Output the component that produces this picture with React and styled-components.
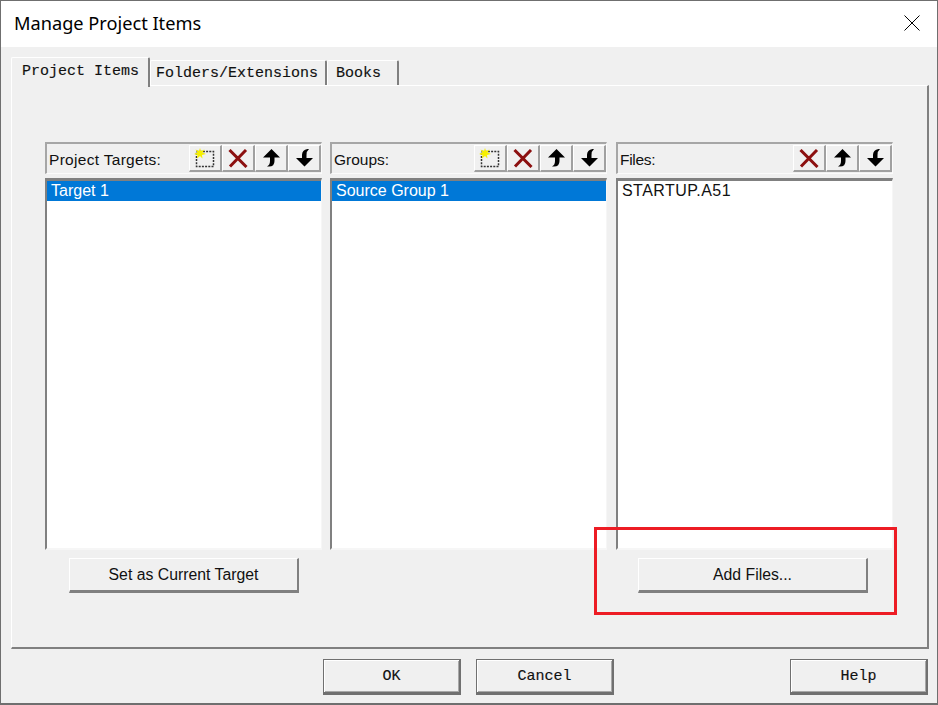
import React from "react";
import styled, { createGlobalStyle } from "styled-components";

const GlobalStyle = createGlobalStyle`
    html, body {
        margin: 0;
        padding: 0;
        background: #f0f0f0;
    }
`;

const columns = [
    {
        title: "Project Targets:",
        titleTracking: 0.3,
        items: ["Target 1"],
        selected: true,
        canAdd: true,
        action: "Set as Current Target",
        actionLeft: 24,
    },
    {
        title: "Groups:",
        titleTracking: 0,
        items: ["Source Group 1"],
        selected: true,
        canAdd: true,
    },
    {
        title: "Files:",
        titleTracking: -0.3,
        items: ["STARTUP.A51"],
        itemTracking: 0.45,
        selected: false,
        canAdd: false,
        action: "Add Files...",
        actionLeft: 22,
    },
];

function NewIcon() {
    return (
        <svg width="22" height="20" viewBox="0 0 22 20">
            <rect x="2.5" y="3.5" width="17" height="15" fill="none" stroke="#333" strokeWidth="1.5" strokeDasharray="2 1.2" />
            <path d="M6 0 L7 3 L10.5 1.5 L8.5 4.5 L12 6 L8 7 L8.5 10.5 L6 8 L3 10.5 L3.5 7 L0 6 L3.5 4.5 L1.5 1.5 L5 3 Z" fill="#f6f000" />
        </svg>
    );
}

function DeleteIcon() {
    return (
        <svg width="20" height="19" viewBox="0 0 20 19">
            <path d="M1.5 1 L18.5 18 M18 1 L2 17.5" fill="none" stroke="#8c1010" strokeWidth="3" />
        </svg>
    );
}

function UpIcon() {
    return (
        <svg width="17" height="18" viewBox="0 0 17 18">
            <path d="M8.5 0 L17 8.5 H11.5 V12 Q11.5 17.5 6 17.5 H4 Q7 16 7 12 V8.5 H0 Z" fill="#000" />
        </svg>
    );
}

function DownIcon() {
    return (
        <svg width="17" height="18" viewBox="0 0 17 18">
            <path d="M8.5 17.5 L0 9 H6 V6 Q6 1 11.5 0 H13 Q10.5 2 10.5 6 V9 H17 Z" fill="#000" />
        </svg>
    );
}

export default function App() {
    return (
        <Window>
            <GlobalStyle />
            <TitleBar>
                <Title>Manage Project Items</Title>
                <CloseButton>
                    <svg width="16" height="16" viewBox="0 0 16 16">
                        <path d="M0.5 0.5 L15.5 15.5 M15.5 0.5 L0.5 15.5" stroke="#000" strokeWidth="1" />
                    </svg>
                </CloseButton>
            </TitleBar>
            <Body>
                <TabStrip>
                    <Tab $active>Project Items</Tab>
                    <Tab>Folders/Extensions</Tab>
                    <Tab $last>Books</Tab>
                </TabStrip>
                <Panel>
                    <ColumnGrid>
                        {columns.map((column) => (
                            <Column key={column.title}>
                                <ColumnHeader>
                                    <HeaderLabel $tracking={column.titleTracking}>{column.title}</HeaderLabel>
                                    {column.canAdd && (
                                        <ToolButton>
                                            <NewIcon />
                                        </ToolButton>
                                    )}
                                    <ToolButton>
                                        <DeleteIcon />
                                    </ToolButton>
                                    <ToolButton>
                                        <UpIcon />
                                    </ToolButton>
                                    <ToolButton>
                                        <DownIcon />
                                    </ToolButton>
                                </ColumnHeader>
                                <ListBox>
                                    {column.items.map((item) => (
                                        <ListItem key={item} $selected={column.selected} $tracking={column.itemTracking}>
                                            {item}
                                        </ListItem>
                                    ))}
                                </ListBox>
                                <ActionRow>
                                    {column.action && <ActionButton $left={column.actionLeft}>{column.action}</ActionButton>}
                                </ActionRow>
                            </Column>
                        ))}
                    </ColumnGrid>
                </Panel>
                <Footer>
                    <FooterGroup>
                        <DialogButton>OK</DialogButton>
                        <DialogButton>Cancel</DialogButton>
                    </FooterGroup>
                    <DialogButton>Help</DialogButton>
                </Footer>
            </Body>
            <Highlight />
        </Window>
    );
}

const Window = styled.div`
    position: relative;
    box-sizing: border-box;
    width: 938px;
    height: 705px;
    display: flex;
    flex-direction: column;
    border: 1px solid #6f6f6f;
    border-bottom-width: 2px;
    background: #f0f0f0;
    overflow: hidden;
`;

const TitleBar = styled.div`
    flex: none;
    height: 46px;
    box-sizing: border-box;
    display: flex;
    align-items: center;
    justify-content: space-between;
    background: #fff;
    padding: 0 17px 2px 13px;
`;

const Title = styled.div`
    font-family: "Noto Sans", sans-serif;
    font-size: 18.2px;
    color: #000;
`;

const CloseButton = styled.div`
    display: flex;
    width: 16px;
    height: 16px;
`;

const Body = styled.div`
    flex: 1;
    display: flex;
    flex-direction: column;
    padding: 10px 9px 0 10px;
`;

const TabStrip = styled.div`
    display: flex;
    align-items: flex-start;
    height: 28px;
    position: relative;
    z-index: 1;
`;

const Tab = styled.div`
    box-sizing: border-box;
    height: ${({ $active }) => ($active ? "30px" : "25px")};
    margin-top: ${({ $active }) => ($active ? "0" : "3px")};
    padding: ${({ $active, $last }) => ($active ? "5px 0 0 10px" : $last ? "4px 0 0 8px" : "4px 0 0 5px")};
    width: ${({ $active, $last }) => ($active ? "139px" : $last ? "72px" : "177px")};
    background: #f0f0f0;
    border-top: 1px solid #fff;
    border-left: 1px solid #fff;
    border-right: 2px solid #808080;
    border-radius: 2px 2px 0 0;
    font-family: "Liberation Mono", monospace;
    font-size: 15px;
    -webkit-text-stroke: 0.15px #111;
    color: #111;
    white-space: pre;
`;

const Panel = styled.div`
    box-sizing: border-box;
    width: 918px;
    height: 564px;
    padding: 56px 0 0 33px;
    border-top: 1px solid #fff;
    border-left: 1px solid #fff;
    border-right: 2px solid #808080;
    border-bottom: 2px solid #808080;
`;

const ColumnGrid = styled.div`
    display: flex;
    gap: 8px;
`;

const Column = styled.div`
    width: 277px;
    display: flex;
    flex-direction: column;
    &:last-child {
        margin-left: 1px;
    }
`;

const ColumnHeader = styled.div`
    box-sizing: border-box;
    height: 32px;
    display: flex;
    align-items: stretch;
    padding: 1px 0 1px 0;
    border-top: 2px solid #a6a6a6;
    border-left: 2px solid #a6a6a6;
    border-right: 1px solid #fbfbfb;
    border-bottom: 1px solid #fbfbfb;
`;

const HeaderLabel = styled.div`
    flex: 1;
    display: flex;
    align-items: center;
    padding: 2px 0 0 2px;
    font-family: "Liberation Sans", sans-serif;
    font-size: 15.5px;
    letter-spacing: ${({ $tracking }) => $tracking || 0}px;
    color: #111;
    white-space: nowrap;
`;

const ToolButton = styled.div`
    box-sizing: border-box;
    width: 33px;
    display: flex;
    align-items: center;
    justify-content: center;
    background: #f0f0f0;
    border-top: 1px solid #fff;
    border-left: 1px solid #fff;
    border-right: 2px solid #a0a0a0;
    border-bottom: 2px solid #a0a0a0;
`;

const ListBox = styled.div`
    box-sizing: border-box;
    height: 372px;
    margin-top: 4px;
    background: #fff;
    border-top: 3px solid #808080;
    border-left: 2px solid #808080;
    border-right: 1px solid #f6f6f6;
    border-bottom: 2px solid #f6f6f6;
`;

const ListItem = styled.div`
    height: 20px;
    line-height: 20px;
    padding-left: 4px;
    font-family: "Liberation Sans", sans-serif;
    font-size: 16px;
    letter-spacing: ${({ $tracking }) => $tracking || 0}px;
    background: ${({ $selected }) => ($selected ? "#0078d7" : "#fff")};
    color: ${({ $selected }) => ($selected ? "#fff" : "#111")};
`;

const ActionRow = styled.div`
    height: 35px;
    margin-top: 8px;
    display: flex;
`;

const ActionButton = styled.div`
    box-sizing: border-box;
    width: 230px;
    height: 35px;
    margin-left: ${({ $left }) => $left}px;
    display: flex;
    align-items: center;
    justify-content: center;
    background: #f0f0f0;
    border-top: 1px solid #fff;
    border-left: 1px solid #fff;
    border-right: 2px solid #808080;
    border-bottom: 3px solid #808080;
    font-family: "Liberation Sans", sans-serif;
    font-size: 15.8px;
    color: #111;
`;

const Footer = styled.div`
    display: flex;
    justify-content: space-between;
    margin-top: 10px;
    padding-left: 312px;
`;

const FooterGroup = styled.div`
    display: flex;
    gap: 15px;
`;

const DialogButton = styled.div`
    box-sizing: border-box;
    width: 138px;
    height: 36px;
    padding-top: 1px;
    display: flex;
    align-items: center;
    justify-content: center;
    background: #f0f0f0;
    border: 1px solid #707070;
    border-right: 2px solid #707070;
    border-bottom: 3px solid #707070;
    box-shadow: inset 1px 1px 0 #fff, inset -1px -1px 0 #a8a8a8;
    font-family: "Liberation Mono", monospace;
    font-size: 15px;
    -webkit-text-stroke: 0.15px #111;
    color: #111;
`;

const Highlight = styled.div`
    position: absolute;
    left: 593px;
    top: 526px;
    width: 297px;
    height: 82px;
    border: 3px solid #ed1c24;
`;
